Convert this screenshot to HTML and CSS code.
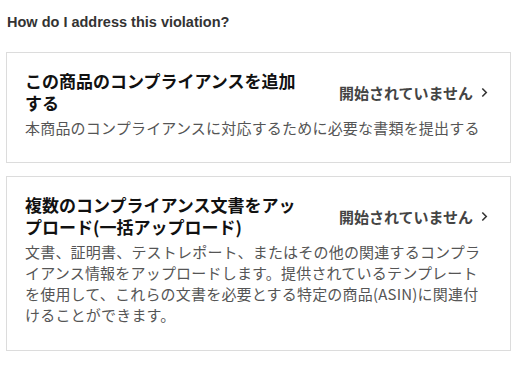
FILE: index.html
```html
<!DOCTYPE html>
<html lang="ja">
<head>
    <meta charset="UTF-8">
    <meta name="viewport" content="width=device-width, initial-scale=1.0">
    <title>How do I address this violation?</title>
    <link rel="stylesheet" href="styles.css">
</head>
<body>
    <div class="page">
        <h3 class="section-title">How do I address this violation?</h3>

        <div class="task-card">
            <div class="task-head">
                <div class="task-title">この商品のコンプライアンスを追加する</div>
                <a href="#" class="task-status">開始されていません
                    <svg class="chevron" viewBox="0 0 8 12" width="7" height="11"><polyline points="1.5,1.5 6,6 1.5,10.5" fill="none" stroke="#333" stroke-width="1.8"/></svg>
                </a>
            </div>
            <p class="task-desc">本商品のコンプライアンスに対応するために必要な書類を提出する</p>
        </div>

        <div class="task-card">
            <div class="task-head">
                <div class="task-title">複数のコンプライアンス文書をアップロード(一括アップロード)</div>
                <a href="#" class="task-status">開始されていません
                    <svg class="chevron" viewBox="0 0 8 12" width="7" height="11"><polyline points="1.5,1.5 6,6 1.5,10.5" fill="none" stroke="#333" stroke-width="1.8"/></svg>
                </a>
            </div>
            <p class="task-desc">文書、証明書、テストレポート、またはその他の関連するコンプライアンス情報をアップロードします。提供されているテンプレートを使用して、これらの文書を必要とする特定の商品(ASIN)に関連付けることができます。</p>
        </div>
    </div>
</body>
</html>
```

FILE: styles.css
```css
body {
    margin: 0;
    padding: 0;
    background-color: #fff;
    font-family: "Noto Sans CJK JP", sans-serif;
    color: #111;
}

.page {
    width: 505px;
    padding: 14px 0 0 6px;
}

.section-title {
    margin: 0 0 21px 1px;
    font-family: "Liberation Sans", "Noto Sans CJK JP", sans-serif;
    font-size: 14.5px;
    line-height: 17px;
    font-weight: bold;
    color: #333;
}

.task-card {
    border: 1px solid #dcdcdc;
    padding: 17px 22px 24px 18px;
    margin-bottom: 13px;
}

.task-card + .task-card {
    padding-bottom: 25px;
}

.task-head {
    display: flex;
    justify-content: space-between;
    align-items: center;
}

.task-title {
    max-width: 285px;
    font-size: 17px;
    line-height: 22px;
    font-weight: bold;
    color: #111;
}

.task-status {
    display: flex;
    align-items: center;
    gap: 8px;
    font-size: 15px;
    font-weight: bold;
    color: #444;
    text-decoration: none;
    white-space: nowrap;
}

.task-desc {
    margin: 3px 0 0;
    width: 458px;
    font-size: 15px;
    line-height: 21px;
    letter-spacing: 0.2px;
    color: #555;
}
```
